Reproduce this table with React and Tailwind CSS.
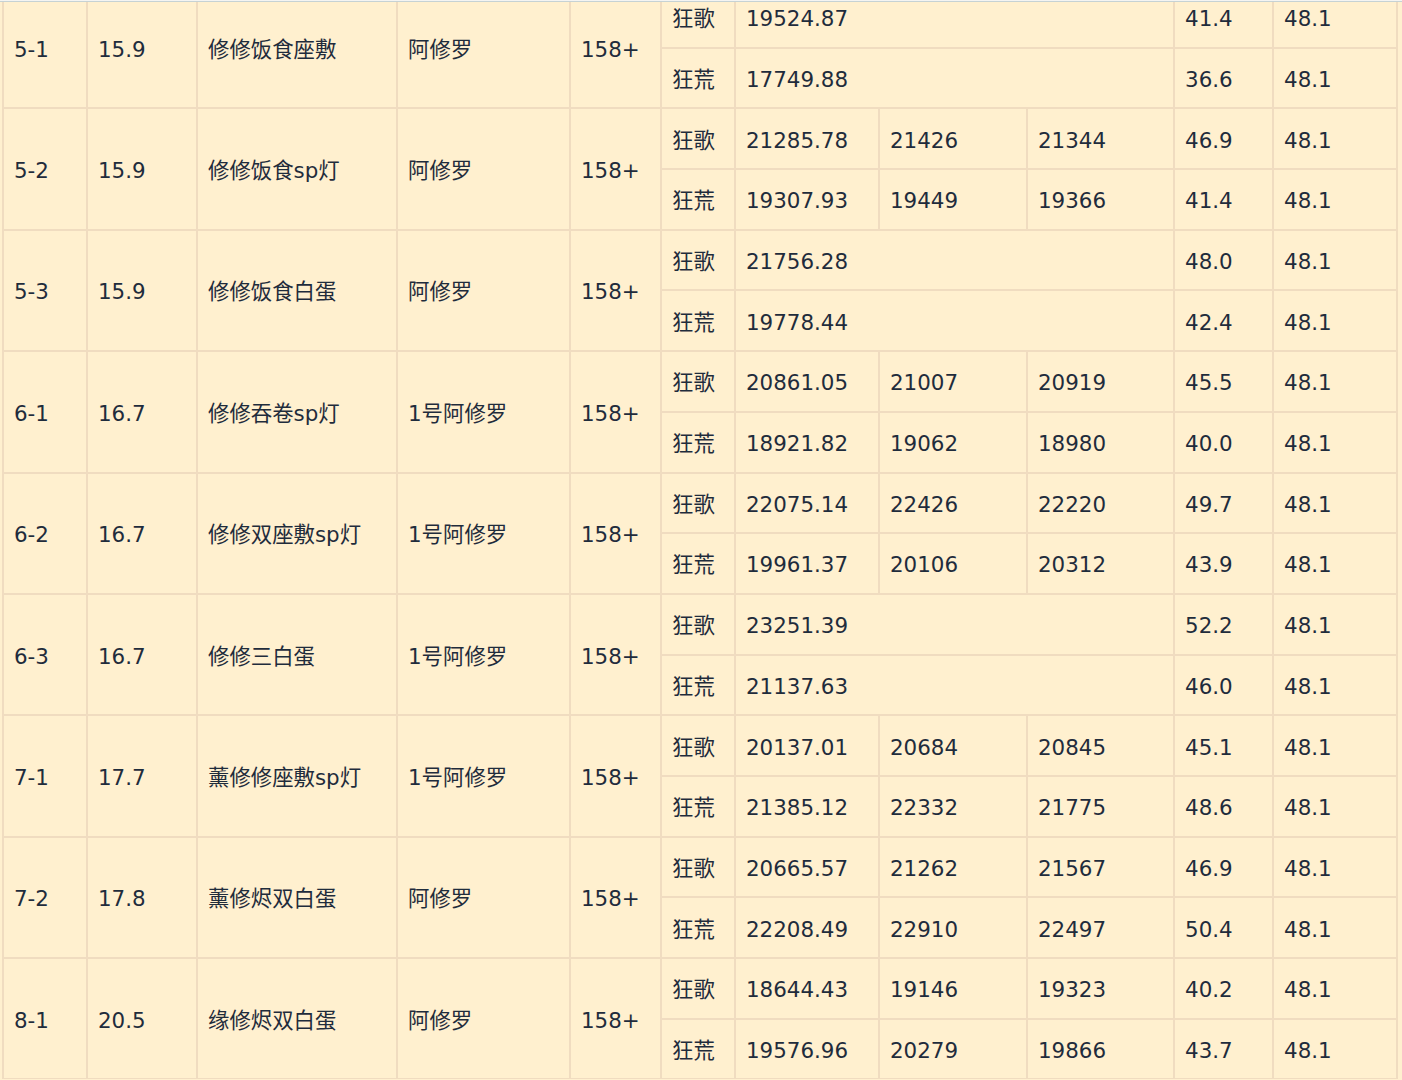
import React from 'react';

const rows = [
  { id: '5-1', lv: '15.9', team: '修修饭食座敷', boss: '阿修罗', a: ['19524.87'], b: ['17749.88'], ra: '41.4', rb: '36.6' },
  { id: '5-2', lv: '15.9', team: '修修饭食sp灯', boss: '阿修罗', a: ['21285.78', '21426', '21344'], b: ['19307.93', '19449', '19366'], ra: '46.9', rb: '41.4' },
  { id: '5-3', lv: '15.9', team: '修修饭食白蛋', boss: '阿修罗', a: ['21756.28'], b: ['19778.44'], ra: '48.0', rb: '42.4' },
  { id: '6-1', lv: '16.7', team: '修修吞卷sp灯', boss: '1号阿修罗', a: ['20861.05', '21007', '20919'], b: ['18921.82', '19062', '18980'], ra: '45.5', rb: '40.0' },
  { id: '6-2', lv: '16.7', team: '修修双座敷sp灯', boss: '1号阿修罗', a: ['22075.14', '22426', '22220'], b: ['19961.37', '20106', '20312'], ra: '49.7', rb: '43.9' },
  { id: '6-3', lv: '16.7', team: '修修三白蛋', boss: '1号阿修罗', a: ['23251.39'], b: ['21137.63'], ra: '52.2', rb: '46.0' },
  { id: '7-1', lv: '17.7', team: '薰修修座敷sp灯', boss: '1号阿修罗', a: ['20137.01', '20684', '20845'], b: ['21385.12', '22332', '21775'], ra: '45.1', rb: '48.6' },
  { id: '7-2', lv: '17.8', team: '薰修烬双白蛋', boss: '阿修罗', a: ['20665.57', '21262', '21567'], b: ['22208.49', '22910', '22497'], ra: '46.9', rb: '50.4' },
  { id: '8-1', lv: '20.5', team: '缘修烬双白蛋', boss: '阿修罗', a: ['18644.43', '19146', '19323'], b: ['19576.96', '20279', '19866'], ra: '40.2', rb: '43.7' },
];

const td = 'border-2 border-[#f0dcc0] pl-[10px] pr-2 pt-[4px] pb-0 align-middle whitespace-nowrap';

function Scores({ vals }) {
  if (vals.length === 1) {
    return <td className={td} colSpan={3}>{vals[0]}</td>;
  }
  return vals.map((v, i) => (
    <td key={i} className={td}>{v}</td>
  ));
}

export default function App() {
  return (
    <div className="min-h-screen bg-[#fff0cf] overflow-hidden">
      <div className="h-[2px] bg-[#f4f4f2] border-b border-[#c6d2d4]" />
      <div className="h-[1077px] overflow-hidden">
        <table
          className="table-fixed border-collapse ml-[2px] -mt-[16px] w-[1394px] text-[21.4px] text-[#1f2c3c]"
          style={{ fontFamily: '"DejaVu Sans", Verdana, "Noto Sans CJK SC", sans-serif' }}
        >
          <colgroup>
            <col className="w-[84px]" />
            <col className="w-[110px]" />
            <col className="w-[200px]" />
            <col className="w-[173px]" />
            <col className="w-[91px]" />
            <col className="w-[74px]" />
            <col className="w-[144px]" />
            <col className="w-[148px]" />
            <col className="w-[147px]" />
            <col className="w-[99px]" />
            <col className="w-[124px]" />
          </colgroup>
          <tbody>
            {rows.map((r) => (
              <React.Fragment key={r.id}>
                <tr className="h-[60.7px]">
                  <td className={td} rowSpan={2}>{r.id}</td>
                  <td className={td} rowSpan={2}>{r.lv}</td>
                  <td className={td} rowSpan={2}>{r.team}</td>
                  <td className={td} rowSpan={2}>{r.boss}</td>
                  <td className={td} rowSpan={2}>158+</td>
                  <td className={td}>狂歌</td>
                  <Scores vals={r.a} />
                  <td className={td}>{r.ra}</td>
                  <td className={td}>48.1</td>
                </tr>
                <tr className="h-[60.7px]">
                  <td className={td}>狂荒</td>
                  <Scores vals={r.b} />
                  <td className={td}>{r.rb}</td>
                  <td className={td}>48.1</td>
                </tr>
              </React.Fragment>
            ))}
          </tbody>
        </table>
      </div>
    </div>
  );
}
